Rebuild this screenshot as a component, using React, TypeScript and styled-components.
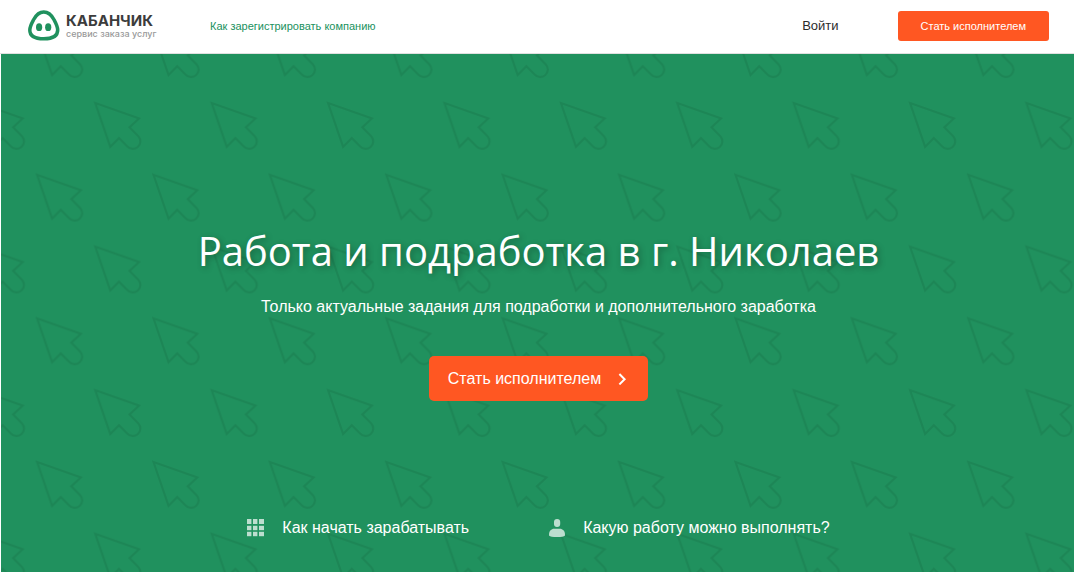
import React from "react";
import styled, { createGlobalStyle } from "styled-components";

const GlobalStyle = createGlobalStyle`
  *, *::before, *::after { box-sizing: border-box; }
  body {
    margin: 0;
    background: #fff;
    font-family: "Liberation Sans", Arial, sans-serif;
  }
  a { text-decoration: none; }
`;

const Page = styled.div`
  display: flex;
  flex-direction: column;
  min-height: 100vh;
`;

const Header = styled.header`
  display: flex;
  align-items: center;
  height: 54px;
  padding: 0 25px 2px 28px;
  border-bottom: 1px solid #e0e0e0;
`;

const Logo = styled.a`
  display: flex;
  align-items: center;
  gap: 6px;
  width: 130px;
  white-space: nowrap;
`;

const LogoText = styled.span`
  display: flex;
  flex-direction: column;
  font-family: Inter, sans-serif;
`;

const LogoName = styled.span`
  color: #3c3c3c;
  font-size: 15px;
  font-weight: 700;
  line-height: 16px;
`;

const LogoTagline = styled.span`
  color: #999;
  font-size: 9px;
  font-weight: 500;
  line-height: 10px;
`;

const HeaderNav = styled.nav`
  display: flex;
  flex: 1;
  align-items: center;
  justify-content: space-between;
  margin-left: 52px;
`;

const HeaderLink = styled.a<{ $strong?: boolean }>`
  color: ${(p) => (p.$strong ? "#2b2b2b" : "#20915e")};
  font-size: ${(p) => (p.$strong ? "13px" : "11px")};
  line-height: 16px;
`;

const Button = styled.button<{ $large?: boolean }>`
  display: inline-flex;
  align-items: center;
  justify-content: center;
  gap: 16px;
  height: ${(p) => (p.$large ? "45px" : "30px")};
  padding: ${(p) => (p.$large ? "0 19px" : "0 23px")};
  border: 0;
  border-radius: ${(p) => (p.$large ? "5px" : "3px")};
  background: #ff5722;
  color: #fff;
  font-family: inherit;
  font-size: ${(p) => (p.$large ? "16px" : "11px")};
  white-space: nowrap;
  cursor: pointer;
`;

const HeaderAction = styled.div`
  margin-left: 59px;
`;

const Hero = styled.main`
  position: relative;
  display: flex;
  flex: 1;
  flex-direction: column;
  align-items: center;
  margin-left: 1px;
  padding: 168px 24px 34px 26px;
  background: #20915e;
  color: #fff;
  text-align: center;
  overflow: hidden;
  isolation: isolate;
`;

const PatternLayer = styled.svg`
  position: absolute;
  inset: 0;
  z-index: -1;
  width: 100%;
  height: 100%;
`;

const Title = styled.h1`
  margin: 0;
  font-family: "Open Sans", sans-serif;
  font-size: 40px;
  font-weight: 400;
  line-height: 58px;
  text-shadow: 2px 2px 6px rgba(0, 0, 0, 0.3);
`;

const Subtitle = styled.p`
  margin: 17px 0 39px;
  font-size: 16px;
  line-height: 20px;
`;

const HeroLinks = styled.nav`
  display: flex;
  flex-wrap: wrap;
  justify-content: center;
  gap: 16px 80px;
  margin-top: auto;
`;

const HeroLink = styled.a`
  display: flex;
  align-items: center;
  gap: 18px;
  color: #fff;
  font-size: 16px;
  line-height: 20px;
`;

function PigMark() {
  return (
    <svg width="32" height="31" viewBox="0 0 32 31" aria-hidden="true">
      <path
        d="M15.800 2C10.800 2 8 5.200 5.700 9.500C3.700 13.200 1.800 16.400 1.800 20C1.800 26.800 7.300 28.800 15.800 28.800C24.300 28.800 29.700 26.800 29.700 20C29.700 16.400 27.900 13.200 25.900 9.500C23.600 5.200 20.800 2 15.800 2Z"
        fill="none"
        stroke="#20915e"
        strokeWidth="3.500"
      />
      <ellipse cx="11.100" cy="17.200" rx="3.100" ry="3.900" fill="#20915e" />
      <ellipse cx="20.200" cy="17.200" rx="3.100" ry="3.900" fill="#20915e" />
    </svg>
  );
}

function Chevron() {
  return (
    <svg width="12" height="12" viewBox="0 0 12 12" aria-hidden="true">
      <path d="M2.400 1L7.600 6.200L2.400 11.400" fill="none" stroke="#fff" strokeWidth="2" />
    </svg>
  );
}

function GridIcon() {
  const steps = [0, 6, 12];
  return (
    <svg width="17" height="18" viewBox="0 0 17 18" aria-hidden="true">
      {steps.map((y) =>
        steps.map((x) => (
          <rect
            key={`${x}-${y}`}
            x={x}
            y={y === 6 ? 6.8 : y === 12 ? 12.8 : 0}
            width={x === 12 ? 5 : 4.4}
            height={y === 0 ? 5 : 4.4}
            fill="#bcdecf"
          />
        ))
      )}
    </svg>
  );
}

function PersonIcon() {
  return (
    <svg width="16" height="18" viewBox="0 0 16 18" aria-hidden="true">
      <rect x="5" y="0" width="6.200" height="8" rx="3" fill="#bcdecf" />
      <path
        d="M0 15.500C0 12 2.500 9.800 5 9.800H11C13.500 9.800 16 12 16 15.500V16.500Q14.500 18 8 18Q1.500 18 0 16.500Z"
        fill="#bcdecf"
      />
    </svg>
  );
}

function CursorPattern() {
  const cursor = "M0 0L43.800 15.500L34.200 24.300L43.200 33.300A7.500 7.500 0 0 1 32 43.300L23.700 35L15 43.800Z";
  return (
    <PatternLayer aria-hidden="true">
      <defs>
        <pattern
          id="cursors"
          x="34.600"
          y="47"
          width="116.400"
          height="143.600"
          patternUnits="userSpaceOnUse"
        >
          <g fill="none" stroke="#1d8656" strokeWidth="2.200">
            <path d={cursor} transform="translate(59.700 2)" />
            <path d={cursor} transform="translate(1.500 73.800)" />
          </g>
        </pattern>
      </defs>
      <rect width="100%" height="100%" fill="url(#cursors)" />
    </PatternLayer>
  );
}

export default function App() {
  return (
    <Page>
      <GlobalStyle />
      <Header>
        <Logo href="#">
          <PigMark />
          <LogoText>
            <LogoName>КАБАНЧИК</LogoName>
            <LogoTagline>сервис заказа услуг</LogoTagline>
          </LogoText>
        </Logo>
        <HeaderNav>
          <HeaderLink href="#register">Как зарегистрировать компанию</HeaderLink>
          <HeaderLink href="#login" $strong>
            Войти
          </HeaderLink>
        </HeaderNav>
        <HeaderAction>
          <Button type="button">Стать исполнителем</Button>
        </HeaderAction>
      </Header>
      <Hero>
        <CursorPattern />
        <Title>Работа и подработка в г. Николаев</Title>
        <Subtitle>Только актуальные задания для подработки и дополнительного заработка</Subtitle>
        <Button type="button" $large>
          Стать исполнителем
          <Chevron />
        </Button>
        <HeroLinks>
          <HeroLink href="#start">
            <GridIcon />
            Как начать зарабатывать
          </HeroLink>
          <HeroLink href="#jobs">
            <PersonIcon />
            Какую работу можно выполнять?
          </HeroLink>
        </HeroLinks>
      </Hero>
    </Page>
  );
}
